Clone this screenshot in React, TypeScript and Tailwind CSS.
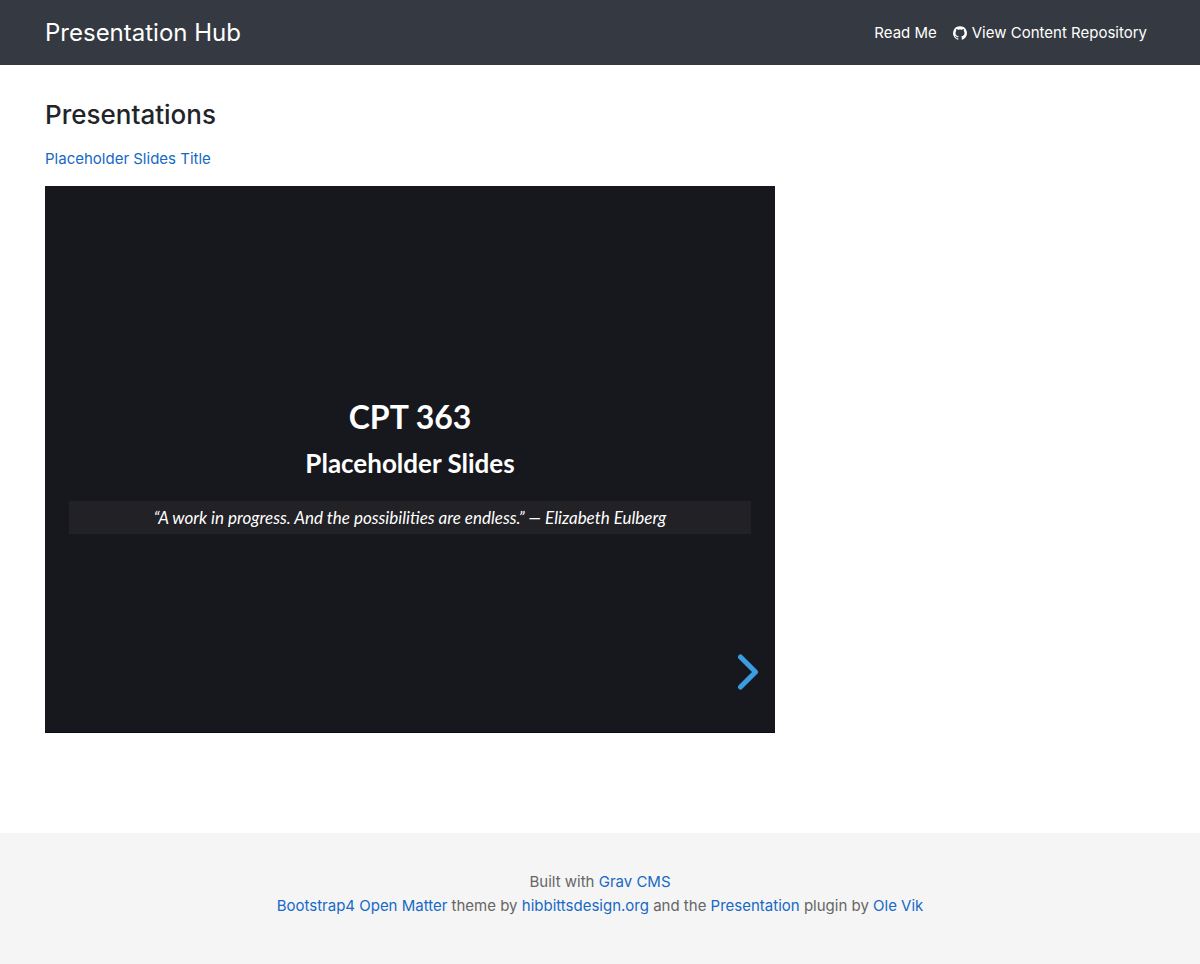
import type { ReactNode } from "react";

function TextLink({ children }: { children: ReactNode }) {
  return (
    <a href="#" className="text-[#1669c5] hover:underline">
      {children}
    </a>
  );
}

function GithubIcon() {
  return (
    <svg viewBox="0 128 1536 1504" className="size-[14px]" fill="currentColor" aria-hidden="true">
      <path d="M768 128q209 0 385.5 103t279.5 279.5 103 385.5q0 251-146.5 451.5t-378.5 277.5q-27 5-40-7t-13-30q0-3 .5-76.5t.5-134.5q0-97-52-142 57-6 102.5-18t94-39 81-66.5 53-105 20.5-150.5q0-119-79-206 37-91-8-204-28-9-81 11t-92 44l-38 24q-93-26-192-26t-192 26q-16-11-42.5-27t-83.5-38.5-85-13.5q-45 113-8 204-79 87-79 206 0 85 20.5 150t52.5 105 80.5 67 94 39 102.5 18q-39 36-49 103-21 10-45 15t-57 5-65.5-21.5-55.5-62.5q-19-32-48.5-52t-49.5-24l-20-3q-21 0-29 4.5t-5 11.5 9 14 13 12l7 5q22 10 43.5 38t31.5 51l10 23q13 38 44 61.5t67 30 69.5 7 55.5-3.5l23-4q0 38 .5 88.5t.5 54.5q0 18-13 30t-40 7q-232-77-378.5-277.5t-146.5-451.5q0-209 103-385.5t279.5-279.5 385.5-103z" />
    </svg>
  );
}

function Header() {
  return (
    <header className="flex h-[65px] items-center justify-between bg-[#353941] pt-px pr-[53px] pl-[45px] text-white">
      <a href="#" className="text-2xl">
        Presentation Hub
      </a>
      <nav className="flex items-center gap-4">
        <a href="#">Read Me</a>
        <a href="#" className="flex items-center gap-[5px]">
          <GithubIcon />
          View Content Repository
        </a>
      </nav>
    </header>
  );
}

function Slide() {
  return (
    <section
      aria-label="Slides"
      className="relative flex aspect-[730/547] w-full max-w-[730px] flex-col items-center justify-center border-b border-[#0c0c0f] bg-[#17181d] px-6 pt-3 text-center font-['Lato',sans-serif] text-white"
    >
      <h2 className="text-[32px] leading-10 font-bold">CPT 363</h2>
      <h3 className="mt-[10px] text-[26px] leading-8 font-bold">Placeholder Slides</h3>
      <blockquote className="mt-[22px] w-full bg-[#222126] text-[17px] leading-[33px] italic">
        “A work in progress. And the possibilities are endless.” — Elizabeth Eulberg
      </blockquote>
      <button type="button" aria-label="Next slide" className="absolute right-4 bottom-[42px]">
        <svg viewBox="0 0 22 36" className="h-9 w-[22px]" fill="none" stroke="#3a9de2" strokeWidth="5" strokeLinecap="round" strokeLinejoin="round">
          <path d="M3.5 3 18.5 18 3.5 33" />
        </svg>
      </button>
    </section>
  );
}

export default function App() {
  return (
    <div className="flex min-h-screen flex-col bg-white font-['Inter',sans-serif] text-[15px] leading-6 text-[#212529]">
      <Header />
      <main className="flex-1 px-[45px] pt-8 pb-[100px]">
        <h1 className="text-[26px] leading-9 font-medium">Presentations</h1>
        <p className="mt-[14px] mb-[15px]">
          <TextLink>Placeholder Slides Title</TextLink>
        </p>
        <Slide />
      </main>
      <footer className="bg-[#f5f5f5] px-4 pt-[37px] pb-[46px] text-center text-[#666666]">
        <p>
          Built with <TextLink>Grav CMS</TextLink>
        </p>
        <p>
          <TextLink>Bootstrap4 Open Matter</TextLink> theme by <TextLink>hibbittsdesign.org</TextLink> and the{" "}
          <TextLink>Presentation</TextLink> plugin by <TextLink>Ole Vik</TextLink>
        </p>
      </footer>
    </div>
  );
}
